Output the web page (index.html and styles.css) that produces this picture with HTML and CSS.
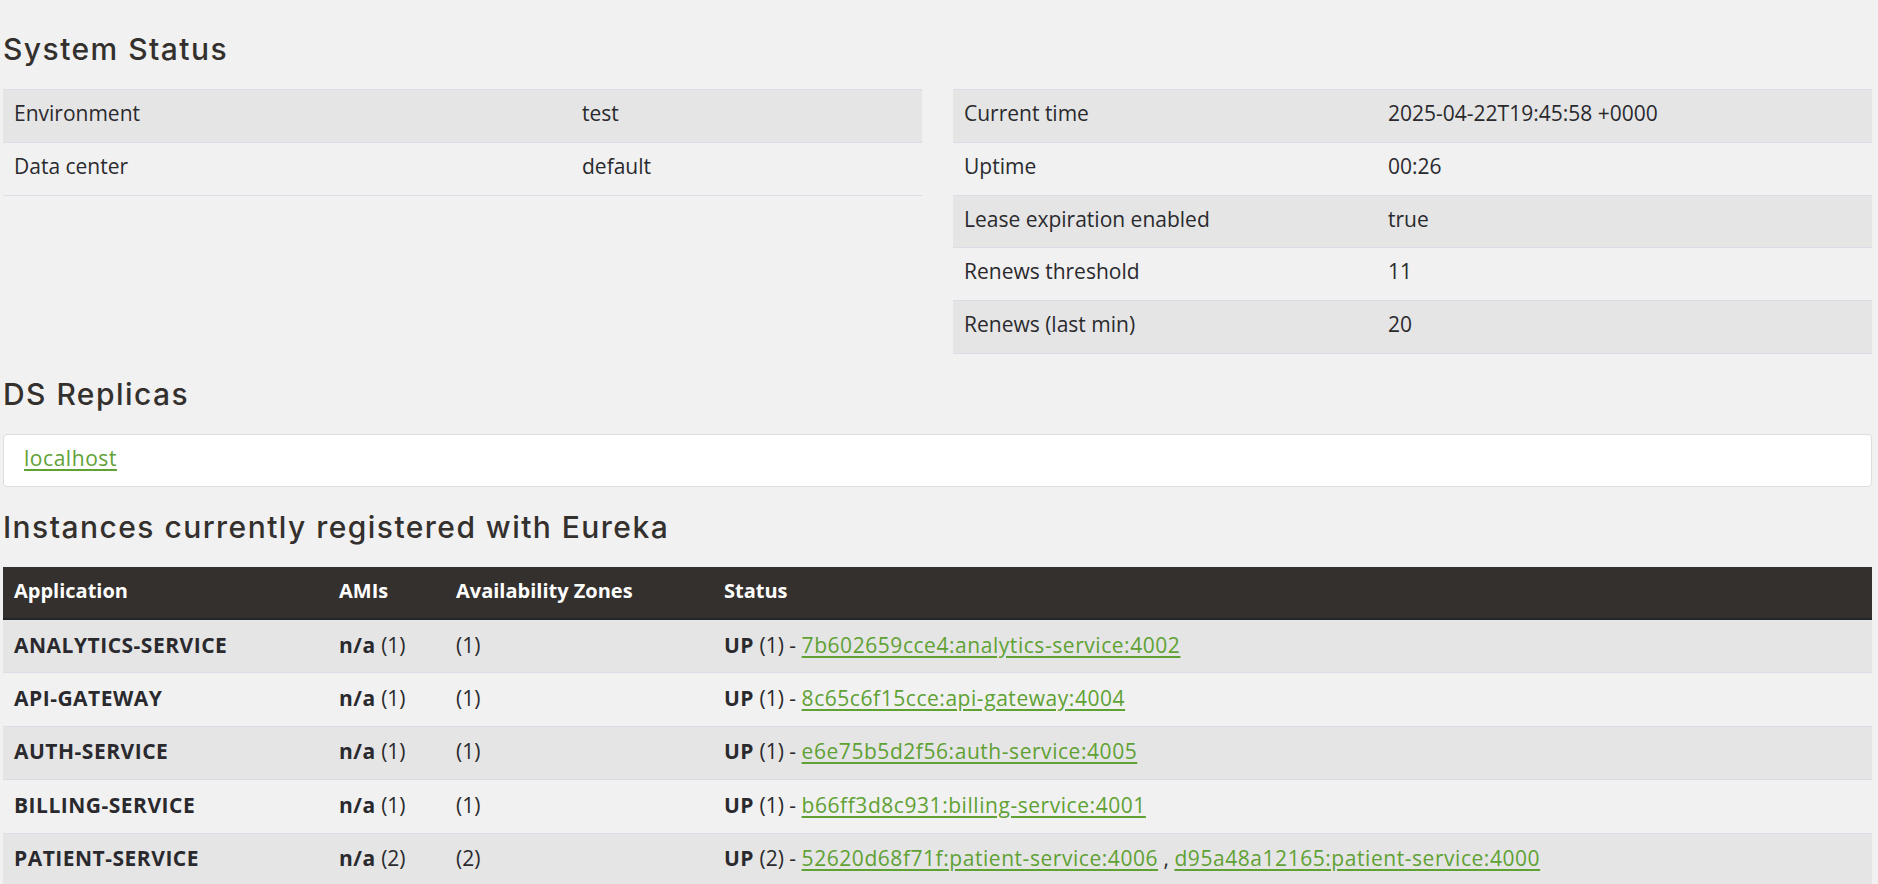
FILE: index.html
```html
<!DOCTYPE html>
<html lang="en">
<head>
<meta charset="utf-8">
<title>Eureka</title>
<link rel="stylesheet" href="styles.css">
</head>
<body>
<div class="page">
  <h2 class="section-title first">System Status</h2>
  <div class="status-grid">
    <table class="kv-table left">
      <tbody>
        <tr class="odd"><td class="key">Environment</td><td>test</td></tr>
        <tr><td class="key">Data center</td><td>default</td></tr>
      </tbody>
    </table>
    <table class="kv-table right">
      <tbody>
        <tr class="odd"><td class="key">Current time</td><td>2025-04-22T19:45:58 +0000</td></tr>
        <tr><td class="key">Uptime</td><td>00:26</td></tr>
        <tr class="odd"><td class="key">Lease expiration enabled</td><td>true</td></tr>
        <tr><td class="key">Renews threshold</td><td>11</td></tr>
        <tr class="odd"><td class="key">Renews (last min)</td><td>20</td></tr>
      </tbody>
    </table>
  </div>

  <h2 class="section-title replicas-title">DS Replicas</h2>
  <ul class="replica-list">
    <li class="replica-item"><a href="#">localhost</a></li>
  </ul>

  <h2 class="section-title instances-title">Instances currently registered with Eureka</h2>
  <table class="instances">
    <thead>
      <tr>
        <th class="c-app">Application</th>
        <th class="c-ami">AMIs</th>
        <th class="c-zone">Availability Zones</th>
        <th class="c-status">Status</th>
      </tr>
    </thead>
    <tbody>
      <tr class="odd">
        <td><b>ANALYTICS-SERVICE</b></td>
        <td><b>n/a</b> (1)</td>
        <td>(1)</td>
        <td><b>UP</b> (1) - <a href="#">7b602659cce4:analytics-service:4002</a></td>
      </tr>
      <tr>
        <td><b>API-GATEWAY</b></td>
        <td><b>n/a</b> (1)</td>
        <td>(1)</td>
        <td><b>UP</b> (1) - <a href="#">8c65c6f15cce:api-gateway:4004</a></td>
      </tr>
      <tr class="odd">
        <td><b>AUTH-SERVICE</b></td>
        <td><b>n/a</b> (1)</td>
        <td>(1)</td>
        <td><b>UP</b> (1) - <a href="#">e6e75b5d2f56:auth-service:4005</a></td>
      </tr>
      <tr>
        <td><b>BILLING-SERVICE</b></td>
        <td><b>n/a</b> (1)</td>
        <td>(1)</td>
        <td><b>UP</b> (1) - <a href="#">b66ff3d8c931:billing-service:4001</a></td>
      </tr>
      <tr class="odd">
        <td><b>PATIENT-SERVICE</b></td>
        <td><b>n/a</b> (2)</td>
        <td>(2)</td>
        <td><b>UP</b> (2) - <a href="#">52620d68f71f:patient-service:4006</a> , <a href="#">d95a48a12165:patient-service:4000</a></td>
      </tr>
    </tbody>
  </table>
</div>
</body>
</html>
```

FILE: styles.css
```css
html, body {
  margin: 0;
  padding: 0;
}

body {
  background: #f1f1f1;
  color: #34302d;
  font-family: "Open Sans", "Noto Sans", sans-serif;
  font-size: 21px;
  overflow: hidden;
}

.page {
  padding: 0 6px 0 3px;
}

.section-title {
  font-family: Inter, "Open Sans", sans-serif;
  font-weight: 500;
  font-size: 30px;
  line-height: 36px;
  letter-spacing: 1.45px;
  color: #34302d;
  margin: 24px 0 22px 0;
}

.section-title.first {
  margin-top: 31px;
}

.section-title.replicas-title {
  margin-top: 22px;
}

.section-title.instances-title {
  margin-top: 22.5px;
  margin-bottom: 22px;
}

.status-grid {
  display: grid;
  grid-template-columns: 1fr 1fr;
  column-gap: 31px;
  align-items: start;
}

table {
  border-collapse: collapse;
  border-spacing: 0;
  width: 100%;
}

.kv-table {
  table-layout: fixed;
  border-bottom: 1px solid #dcdce4;
}

.kv-table td {
  padding: 10px 11px 14.2px 11px;
  line-height: 27.6px;
  border-top: 1px solid #dcdce4;
  color: #2a2a2e;
  white-space: nowrap;
}

.kv-table tr.odd td {
  background: #e5e5e5;
}

.kv-table.left td.key {
  width: 546px;
}

.kv-table.right td.key {
  width: 402px;
}

.replica-list {
  list-style: none;
  margin: 0;
  padding: 0;
}

.replica-item {
  background: #ffffff;
  border: 1px solid #dddddd;
  border-radius: 4px;
  padding: 9px 20px 14px 20px;
  line-height: 28px;
}

a {
  color: #5fa134;
  text-decoration: underline;
  text-underline-offset: 3px;
  text-decoration-thickness: 2px;
  letter-spacing: 0.55px;
}

.instances {
  table-layout: fixed;
}

.instances th {
  background: #34302d;
  color: #ffffff;
  font-size: 20px;
  font-weight: 700;
  text-align: left;
  padding: 10px 11px 13px 11px;
  line-height: 27.6px;
  border-bottom: 2px solid #222428;
  white-space: nowrap;
}

.instances th.c-app { width: 303px; }
.instances th.c-ami { width: 95px; }
.instances th.c-zone { width: 246px; }

.instances td {
  padding: 11.5px 11px 13.3px 11px;
  line-height: 27.6px;
  border-bottom: 1px solid #dcdce4;
  color: #2a2a2e;
  white-space: nowrap;
}

.instances tr.odd td {
  background: #e5e5e5;
}

.instances b {
  font-weight: 700;
  letter-spacing: 0.5px;
}
```
